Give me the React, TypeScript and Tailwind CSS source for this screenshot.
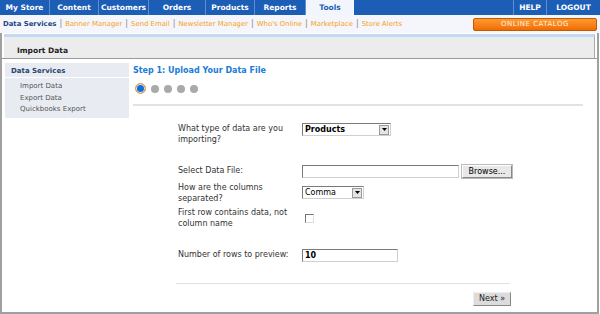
import { useState } from 'react';

const tabs = [
  { label: 'My Store', w: 'w-[50px]' },
  { label: 'Content', w: 'w-[49px]' },
  { label: 'Customers', w: 'w-[50px]' },
  { label: 'Orders', w: 'w-[57px]' },
  { label: 'Products', w: 'w-[49px]' },
  { label: 'Reports', w: 'w-[51px]' },
];

const subLinks = ['Banner Manager', 'Send Email', 'Newsletter Manager', "Who's Online", 'Marketplace', 'Store Alerts'];

function Select({ value, width, bold = false }: { value: string; width: string; bold?: boolean }) {
  return (
    <div className={`flex h-[13px] ${width} items-center border border-[#7a7a7a] border-r-[#d0d0d0] border-b-[#d0d0d0] bg-white`}>
      <span className={`flex-1 pl-[2px] text-[8px] leading-none text-black ${bold ? 'font-semibold' : ''}`}>{value}</span>
      <span className="mr-[1px] flex h-[10px] w-[10px] items-center justify-center border border-[#9a9a9a] bg-[#e4e4e4]">
        <svg width="5" height="3" viewBox="0 0 5 3">
          <path d="M0 0h5L2.5 3z" fill="#000" />
        </svg>
      </span>
    </div>
  );
}

function Field({ label, children, className = '' }: { label: React.ReactNode; children: React.ReactNode; className?: string }) {
  return (
    <div className={`flex items-start ${className}`}>
      <div className="w-[124px] text-[8px] leading-[11px] text-[#333]">{label}</div>
      <div>{children}</div>
    </div>
  );
}

export default function App() {
  const [firstRow, setFirstRow] = useState(false);

  return (
    <div className="h-[314px] w-[600px] overflow-hidden bg-white font-['DejaVu_Sans',Verdana,sans-serif]">
      {/* top tabs */}
      <div className="flex h-[15px] bg-[#1c5db6]">
        {tabs.map((t) => (
          <div
            key={t.label}
            className={`${t.w} flex items-center justify-center border-r border-[#5d8fd0] text-[7.5px] font-bold text-white`}
          >
            {t.label}
          </div>
        ))}
        <div className="flex w-[48px] items-center justify-center bg-[#f2f6fc] text-[7.5px] font-bold text-[#1c5db6]">
          Tools
        </div>
        <div className="flex-1" />
        <div className="flex w-[34px] items-center justify-center border-l border-r border-[#5d8fd0] text-[7.5px] font-bold text-white">
          HELP
        </div>
        <div className="flex w-[53px] items-center justify-center text-[7.5px] font-bold text-white">LOGOUT</div>
      </div>

      {/* sub nav */}
      <div className="flex h-[18px] items-center bg-[#f4f6fb] pl-[3px] pr-[3px]">
        <span className="text-[6.9px] font-bold text-[#1d4584]">Data Services</span>
        {subLinks.map((l) => (
          <span key={l} className="flex items-center">
            <span className="mx-[3px] text-[8px] text-[#888]">|</span>
            <span className="text-[6.9px] text-[#f7a021]">{l}</span>
          </span>
        ))}
        <div className="flex-1" />
        <div className="flex h-[13px] w-[124px] items-center justify-center rounded-[2px] border border-[#c05c00] bg-gradient-to-b from-[#ff9a2e] to-[#f06c00] text-[7px] tracking-[0.5px] text-[#fff3e0]">
          ONLINE CATALOG
        </div>
      </div>

      {/* content box */}
      <div className="h-[281px] w-[599px] border-b-2 border-l-2 border-r-2 border-[#a0a0a0] pt-[1px]">
        <div className="mx-[2px] h-[25px] border-t-[3px] border-r border-[#c3d9f1] border-r-[#aaa] bg-[#ececec]">
          <div className="pl-[13px] pt-[8px] text-[7.5px] font-bold text-[#222]">Import Data</div>
        </div>
        <div className="mt-[-1px] border-t border-[#9a9a9a]" />

        <div className="flex">
          {/* sidebar */}
          <div className="ml-[3px] mt-[4px] w-[124px] self-start bg-[#e8ecf2]">
            <div className="h-[15px] border-b border-white pl-[6px] pt-[3px] text-[7px] font-bold text-[#27456c]">
              Data Services
            </div>
            <div className="flex flex-col gap-[4.5px] pb-[5px] pl-[15px] pt-[5px] text-[7px] leading-[7px] text-[#555]">
              <span>Import Data</span>
              <span>Export Data</span>
              <span>Quickbooks Export</span>
            </div>
          </div>

          {/* main */}
          <div className="ml-[4px] w-[452px] pt-[6px]">
            <div className="text-[8px] font-bold text-[#1a7bd8]">Step 1: Upload Your Data File</div>
            <div className="mt-[6px] flex items-center gap-[5px] pl-[2px]">
              <span className="h-[11px] w-[11px] rounded-full border border-[#f5a040] bg-[#0f6fe0] shadow-[0_0_0_1px_#ffe3c0_inset]" />
              {[0, 1, 2, 3].map((i) => (
                <span key={i} className="h-[8px] w-[8px] rounded-full bg-[#a9a9a9]" />
              ))}
            </div>
            <div className="mt-[10px] h-[2px] w-[450px] bg-[#e2e2e2]" />

            <div className="pl-[45px] pt-[17px]">
              <Field label={<>What type of data are you<br />importing?</>}>
                <Select value="Products" width="w-[89px]" bold />
              </Field>
              <Field label="Select Data File:" className="mt-[20px] items-center">
                <div className="flex items-center gap-[3px]">
                  <div className="h-[13px] w-[157px] border border-[#7a7a7a] border-b-[#d0d0d0] border-r-[#d0d0d0] bg-white" />
                  <div className="flex h-[13px] w-[50px] items-center justify-center border border-[#888] border-l-[#fff] border-t-[#fff] bg-[#e8e8e8] text-[8px] text-black shadow-[0_0_0_1px_#bbb]">
                    Browse...
                  </div>
                </div>
              </Field>
              <Field label={<>How are the columns<br />separated?</>} className="mt-[4px]">
                <div className="pt-[4px]">
                  <Select value="Comma" width="w-[62px]" />
                </div>
              </Field>
              <Field label={<>First row contains data, not<br />column name</>} className="mt-[3px]">
                <div className="pl-[3px] pt-[7px]">
                  <input
                    type="checkbox"
                    checked={firstRow}
                    onChange={(e) => setFirstRow(e.target.checked)}
                    className="m-0 block h-[9px] w-[9px] appearance-none border border-[#777] border-b-[#ddd] border-r-[#ddd] bg-white"
                  />
                </div>
              </Field>
              <Field label="Number of rows to preview:" className="mt-[20px] items-center">
                <div className="flex h-[13px] w-[96px] items-center border border-[#7a7a7a] border-b-[#d0d0d0] border-r-[#d0d0d0] bg-white pl-[2px] text-[8px] font-bold text-black">
                  10
                </div>
              </Field>
            </div>

            <div className="ml-[43px] mt-[21px] h-[1px] w-[334px] bg-[#e0e0ea]" />
            <div className="flex w-[378px] justify-end pt-[8px]">
              <div className="flex h-[14px] w-[38px] items-center justify-center border border-[#888] border-l-[#eee] border-t-[#eee] bg-[#dcdcdc] text-[8px] text-[#222]">
                Next »
              </div>
            </div>
          </div>
        </div>
      </div>
    </div>
  );
}
